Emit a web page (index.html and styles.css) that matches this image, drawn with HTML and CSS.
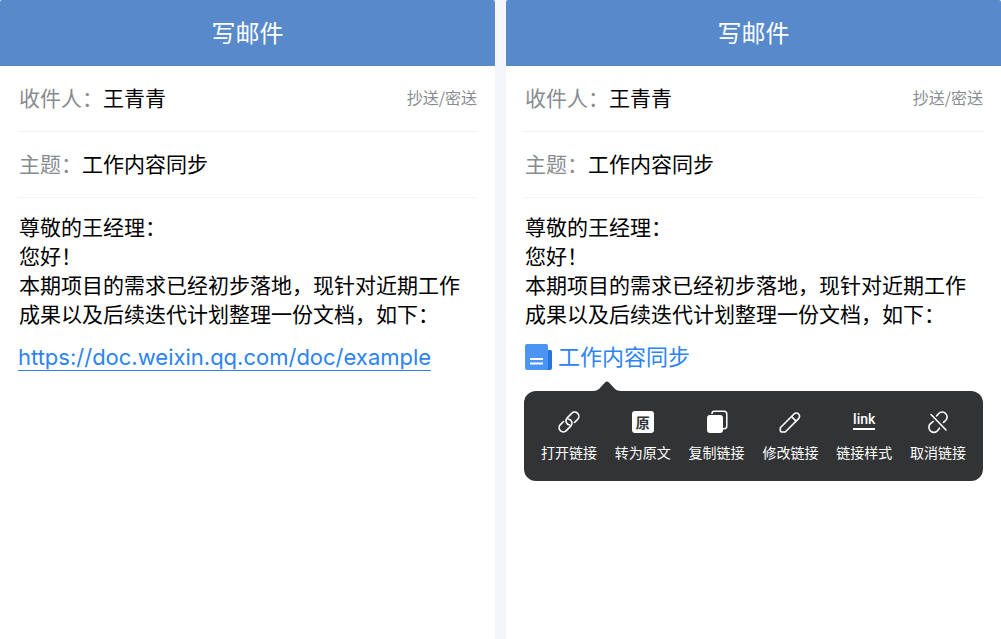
FILE: index.html
```html
<!doctype html>
<html lang="zh-CN">
<head>
    <meta charset="utf-8">
    <meta name="viewport" content="width=device-width, initial-scale=1.0">
    <title>写邮件</title>
    <link rel="stylesheet" href="styles.css">
</head>
<body>
    <main class="compare">
        <!-- 普通链接 -->
        <section class="mail">
            <header class="mail-header">
                <h1>写邮件</h1>
            </header>
            <form class="mail-form">
                <div class="field">
                    <label for="to-1">收件人：</label>
                    <input type="text" id="to-1" value="王青青">
                    <button class="cc-button" type="button">抄送/密送</button>
                </div>
                <div class="field">
                    <label for="subject-1">主题：</label>
                    <input type="text" id="subject-1" value="工作内容同步">
                </div>
                <div class="content">
                    <p>尊敬的王经理：</p>
                    <p>您好！</p>
                    <p>本期项目的需求已经初步落地，现针对近期工作成果以及后续迭代计划整理一份文档，如下：</p>
                </div>
                <div class="link-row">
                    <a class="url-link" href="https://doc.weixin.qq.com/doc/example">https://doc.weixin.qq.com/doc/example</a>
                </div>
            </form>
        </section>

        <!-- 文档链接和操作菜单 -->
        <section class="mail">
            <header class="mail-header">
                <h1>写邮件</h1>
            </header>
            <form class="mail-form">
                <div class="field">
                    <label for="to-2">收件人：</label>
                    <input type="text" id="to-2" value="王青青">
                    <button class="cc-button" type="button">抄送/密送</button>
                </div>
                <div class="field">
                    <label for="subject-2">主题：</label>
                    <input type="text" id="subject-2" value="工作内容同步">
                </div>
                <div class="content">
                    <p>尊敬的王经理：</p>
                    <p>您好！</p>
                    <p>本期项目的需求已经初步落地，现针对近期工作成果以及后续迭代计划整理一份文档，如下：</p>
                </div>
                <div class="link-row">
                    <a class="doc-link" href="https://doc.weixin.qq.com/doc/example">
                        <svg width="28" height="28" viewBox="0 0 28 28">
                            <path d="M20 7h6.500q1.500 0 1.500 1.500V25q0 2-2 2h-6z" fill="#2b73dc"/>
                            <rect x="1" y="1" width="23" height="26" rx="2" fill="#4b94f3"/>
                            <path d="M6 16h13M6 20.500h13" stroke="#fff" stroke-width="2"/>
                        </svg>
                        <span>工作内容同步</span>
                    </a>
                </div>
                <div class="toolbar">
                    <svg class="toolbar-arrow" width="28" height="10" viewBox="0 0 28 10">
                        <path d="M0 10Q4 10 6 8L12 1.500Q14-.5 16 1.500L22 8Q24 10 28 10z" fill="#323335"/>
                    </svg>
                    <button type="button">
                        <svg width="24" height="24" viewBox="0 0 24 24" fill="none" stroke="#fff" stroke-width="1.600" stroke-linecap="round">
                            <g transform="rotate(-45 12 12)">
                                <path d="M15.500 16.200H20a4.200 4.200 0 0 0 0-8.400h-6.300a4.200 4.200 0 0 0-3.300 6.800"/>
                                <path d="M8.500 7.800H4a4.200 4.200 0 0 0 0 8.400h6.300a4.200 4.200 0 0 0 3.300-6.800"/>
                            </g>
                        </svg>
                        <span>打开链接</span>
                    </button>
                    <button type="button">
                        <span class="origin-icon" aria-hidden="true">原</span>
                        <span>转为原文</span>
                    </button>
                    <button type="button">
                        <svg width="24" height="24" viewBox="0 0 24 24">
                            <path d="M7 4V3.500Q7 1.200 9 1.200h10q2.800 0 2.800 2.800v12q0 2.800-2.800 2.800h-1" fill="none" stroke="#fff" stroke-width="1.500"/>
                            <rect x="2" y="5" width="16" height="18" rx="3" fill="#fff"/>
                        </svg>
                        <span>复制链接</span>
                    </button>
                    <button type="button">
                        <svg width="24" height="24" viewBox="0 0 24 24" fill="none" stroke="#fff" stroke-width="1.600" stroke-linejoin="round">
                            <path d="M2.300 17.700L16 4a3.200 3.200 0 0 1 4.600 0 3.200 3.200 0 0 1 0 4.600L7.200 22H3.800q-1.500 0-1.500-1.500zM13.500 6.500l4.600 4.600"/>
                        </svg>
                        <span>修改链接</span>
                    </button>
                    <button type="button">
                        <span class="style-icon" aria-hidden="true">link</span>
                        <span>链接样式</span>
                    </button>
                    <button type="button">
                        <svg width="24" height="24" viewBox="0 0 24 24" fill="none" stroke="#fff" stroke-width="1.600" stroke-linecap="round">
                            <path d="M5 4.500l15 15.500"/>
                            <path d="M10.500 6l2-2.300a4.800 4.800 0 0 1 7.300 0 4.900 4.900 0 0 1-.3 7l-2 1.600"/>
                            <path d="M7.200 11.500l-2.700 2.200a4.900 4.900 0 0 0-.3 7 4.800 4.800 0 0 0 7.300 0l2-2.500"/>
                        </svg>
                        <span>取消链接</span>
                    </button>
                </div>
            </form>
        </section>
    </main>
</body>
</html>
```
FILE: styles.css
```css
* {
    box-sizing: border-box;
}

body {
    margin: 0;
    background-color: #f4f6f9;
    color: #000;
    font-family: "Noto Sans CJK SC", sans-serif;
    font-size: 21px;
}

button,
input {
    margin: 0;
    padding: 0;
    border: none;
    background: none;
    font-family: inherit;
}

button {
    cursor: pointer;
}

a {
    color: #2b83f5;
    text-decoration: none;
}

.compare {
    display: grid;
    grid-template-columns: 1fr 1fr;
    gap: 11px;
    min-height: 100vh;
}

.mail {
    background-color: #fff;
    border-radius: 2px 2px 0 0;
    overflow: hidden;
}

.mail-header {
    display: flex;
    align-items: center;
    justify-content: center;
    height: 66px;
    padding-bottom: 4px;
    background-color: #588acb;
    color: #fff;
}

.mail-header h1 {
    margin: 0;
    font-size: 24px;
    font-weight: 400;
}

.mail-form {
    padding: 0 18px;
}

.field {
    display: flex;
    align-items: center;
    height: 66px;
    padding-bottom: 4px;
    border-bottom: 1px solid #f3f4f5;
}

.field label {
    padding-left: 1px;
    color: #888b90;
}

.field input {
    flex: 1;
    min-width: 0;
    color: #000;
    font-size: 21px;
    outline: none;
}

.cc-button {
    color: #888b90;
    font-size: 16px;
}

.content {
    padding: 14px 0 0 1px;
    line-height: 29px;
}

.content p {
    margin: 0;
}

.link-row {
    display: flex;
    align-items: center;
    height: 28px;
    margin-top: 15px;
    font-size: 22px;
}

.url-link {
    border-bottom: 1px solid #2b83f5;
    font-family: Inter, sans-serif;
    line-height: 26px;
}

.doc-link {
    display: flex;
    align-items: center;
    gap: 6px;
    line-height: 28px;
}

.doc-link span {
    padding-bottom: 4px;
}

.toolbar {
    position: relative;
    display: flex;
    height: 90px;
    margin-top: 20px;
    padding: 0 8px;
    border-radius: 12px;
    background-color: #323335;
}

.toolbar-arrow {
    position: absolute;
    top: -10px;
    left: 69px;
}

.toolbar button {
    display: flex;
    flex: 1;
    flex-direction: column;
    align-items: center;
    justify-content: center;
    gap: 8px;
    color: #fff;
    font-size: 14px;
    line-height: 20px;
    white-space: nowrap;
}

.origin-icon {
    width: 22px;
    height: 22px;
    margin: 1px;
    border-radius: 3px;
    background-color: #fff;
    color: #323335;
    font-size: 14px;
    font-weight: 700;
    line-height: 22px;
}

.style-icon {
    height: 20px;
    margin-bottom: 4px;
    border-bottom: 2px solid #fff;
    font-family: Roboto, sans-serif;
    font-size: 14px;
    font-weight: 500;
    line-height: 18px;
}
```
